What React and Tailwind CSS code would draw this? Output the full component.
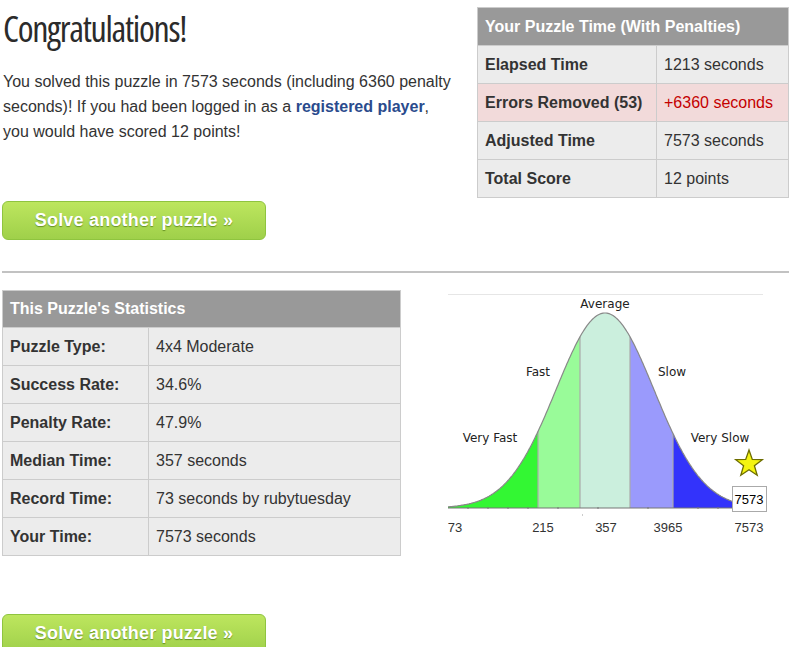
import React from 'react';

const yourTime = [
  { label: 'Elapsed Time', value: '1213 seconds' },
  { label: 'Errors Removed (53)', value: '+6360 seconds', bad: true },
  { label: 'Adjusted Time', value: '7573 seconds' },
  { label: 'Total Score', value: '12 points' },
];

const stats = [
  { label: 'Puzzle Type:', value: '4x4 Moderate' },
  { label: 'Success Rate:', value: '34.6%' },
  { label: 'Penalty Rate:', value: '47.9%' },
  { label: 'Median Time:', value: '357 seconds' },
  { label: 'Record Time:', value: '73 seconds by rubytuesday' },
  { label: 'Your Time:', value: '7573 seconds' },
];

const SolveButton = () => (
  <button
    type="button"
    className="w-[264px] h-[39px] rounded-[6px] border border-[#8fc43f] bg-gradient-to-b from-[#bde65e] to-[#9fd04a] text-white font-bold text-[18px] tracking-[0.2px] [text-shadow:0_1px_1px_rgba(60,100,10,0.6)]"
  >
    Solve another puzzle »
  </button>
);

// bell curve, page coordinates
const curveY = (x) => 509 - 195 * Math.exp(-((x - 607) ** 2) / (2 * 49 * 49));

const band = (x0, x1) => {
  let pts = `${x0},509`;
  for (let x = x0; x <= x1; x += 1) pts += ` ${x},${curveY(x).toFixed(1)}`;
  pts += ` ${x1},509`;
  return pts;
};

const curvePath = () => {
  let d = `M450,${curveY(450).toFixed(1)}`;
  for (let x = 451; x <= 735; x += 1) d += ` L${x},${curveY(x).toFixed(1)}`;
  return d;
};

const Chart = () => {
  const bands = [
    [450, 540, '#33f733'],
    [540, 582, '#99fb99'],
    [582, 632, '#cbefdd'],
    [632, 675, '#9a9afc'],
    [675, 735, '#3333fb'],
  ];
  const lbl = { fontFamily: '"DejaVu Sans", sans-serif', fontSize: 12, fill: '#222' };
  const ax = { fontFamily: '"Liberation Sans", Arial, sans-serif', fontSize: 13, fill: '#333' };
  return (
    <svg width="345" height="255" className="block">
      <g transform="translate(-445,-290)">
        <line x1="450" y1="295.5" x2="765" y2="295.5" stroke="#e6e6e6" />
        {bands.map(([a, b, c]) => (
          <polygon key={a} points={band(a, b)} fill={c} />
        ))}
        {[540, 582, 632, 675].map((x) => (
          <line key={x} x1={x} y1={curveY(x)} x2={x} y2="509" stroke="#aaa" strokeWidth="1.2" />
        ))}
        <path d={curvePath()} fill="none" stroke="#888" strokeWidth="1.2" />
        <line x1="450" y1="509" x2="765" y2="509" stroke="#777" strokeWidth="1.2" />
        {[470, 490, 510, 530, 560, 600, 650, 700, 720].map((x) => (
          <line key={x} x1={x} y1="508" x2={x} y2="510" stroke="#777" />
        ))}
        <line x1="584" y1="516" x2="585" y2="516" stroke="#999" />
        <text x="607" y="309" textAnchor="middle" style={lbl}>Average</text>
        <text x="540" y="377" textAnchor="middle" style={lbl}>Fast</text>
        <text x="674" y="377" textAnchor="middle" style={lbl}>Slow</text>
        <text x="492" y="443" textAnchor="middle" style={lbl}>Very Fast</text>
        <text x="722" y="443" textAnchor="middle" style={lbl}>Very Slow</text>
        <polygon
          points="751,451 754.3,460.4 764.3,460.7 756.4,466.8 759.2,476.3 751,470.7 742.8,476.3 745.6,466.8 737.7,460.7 747.7,460.4"
          fill="#f4f411"
          stroke="#6d6d00"
          strokeWidth="1.3"
        />
        <rect x="734.5" y="487.5" width="34" height="25" fill="#fff" stroke="#aaa" />
        <text x="751" y="505" textAnchor="middle" style={{ ...ax, fill: '#000' }}>7573</text>
        <text x="457" y="533" textAnchor="middle" style={ax}>73</text>
        <text x="545" y="533" textAnchor="middle" style={ax}>215</text>
        <text x="608" y="533" textAnchor="middle" style={ax}>357</text>
        <text x="670" y="533" textAnchor="middle" style={ax}>3965</text>
        <text x="751" y="533" textAnchor="middle" style={ax}>7573</text>
      </g>
    </svg>
  );
};

const App = () => {
  return (
    <div className="w-[787px] ml-[2px] text-[16px] text-[#333] font-['Liberation_Sans',Arial,sans-serif] bg-white">
      <div className="flex items-start justify-between h-[197px]">
        <div className="pl-[1px]">
          <h1 className="mt-[9px] text-[36px] leading-[40px] text-[#2b2b2b] font-['Open_Sans',sans-serif] font-normal [font-stretch:75%] tracking-[-1.3px]">
            Congratulations!
          </h1>
          <p className="mt-[20px] w-[462px] leading-[25px]">
            You solved this puzzle in 7573 seconds (including 6360 penalty seconds)! If you had been
            logged in as a <a href="#" className="font-bold text-[#2a4b8d]">registered player</a>,
            <br />
            you would have scored 12 points!
          </p>
        </div>
        <table className="mt-[7px] w-[312px] border-collapse border border-[#ccc]">
          <thead>
            <tr>
              <th colSpan={2} className="h-[38px] bg-[#999] text-white text-left font-bold px-[7px]">
                Your Puzzle Time (With Penalties)
              </th>
            </tr>
          </thead>
          <tbody>
            {yourTime.map((r) => (
              <tr key={r.label} className={r.bad ? 'bg-[#f2dada]' : 'bg-[#ececec]'}>
                <td className="h-[38px] w-[179px] px-[7px] font-bold border border-[#ccc]">{r.label}</td>
                <td className={`px-[7px] border border-[#ccc] ${r.bad ? 'text-[#c40000]' : ''}`}>{r.value}</td>
              </tr>
            ))}
          </tbody>
        </table>
      </div>

      <div className="mt-[4px]">
        <SolveButton />
      </div>

      <hr className="mt-[31px] border-0 h-[2px] bg-[#c2c2c2]" />

      <div className="mt-[17px] flex items-start">
        <table className="w-[399px] border-collapse border border-[#ccc]">
          <thead>
            <tr>
              <th colSpan={2} className="h-[37px] bg-[#999] text-white text-left font-bold px-[7px]">
                This Puzzle's Statistics
              </th>
            </tr>
          </thead>
          <tbody>
            {stats.map((r) => (
              <tr key={r.label} className="bg-[#ececec]">
                <td className="h-[38px] w-[146px] px-[7px] font-bold border border-[#ccc]">{r.label}</td>
                <td className="px-[7px] border border-[#ccc]">{r.value}</td>
              </tr>
            ))}
          </tbody>
        </table>
        <div className="ml-[42px] -mt-[1px]">
          <Chart />
        </div>
      </div>

      <div className="mt-[58px] pb-[20px]">
        <SolveButton />
      </div>
    </div>
  );
};

export default App;
